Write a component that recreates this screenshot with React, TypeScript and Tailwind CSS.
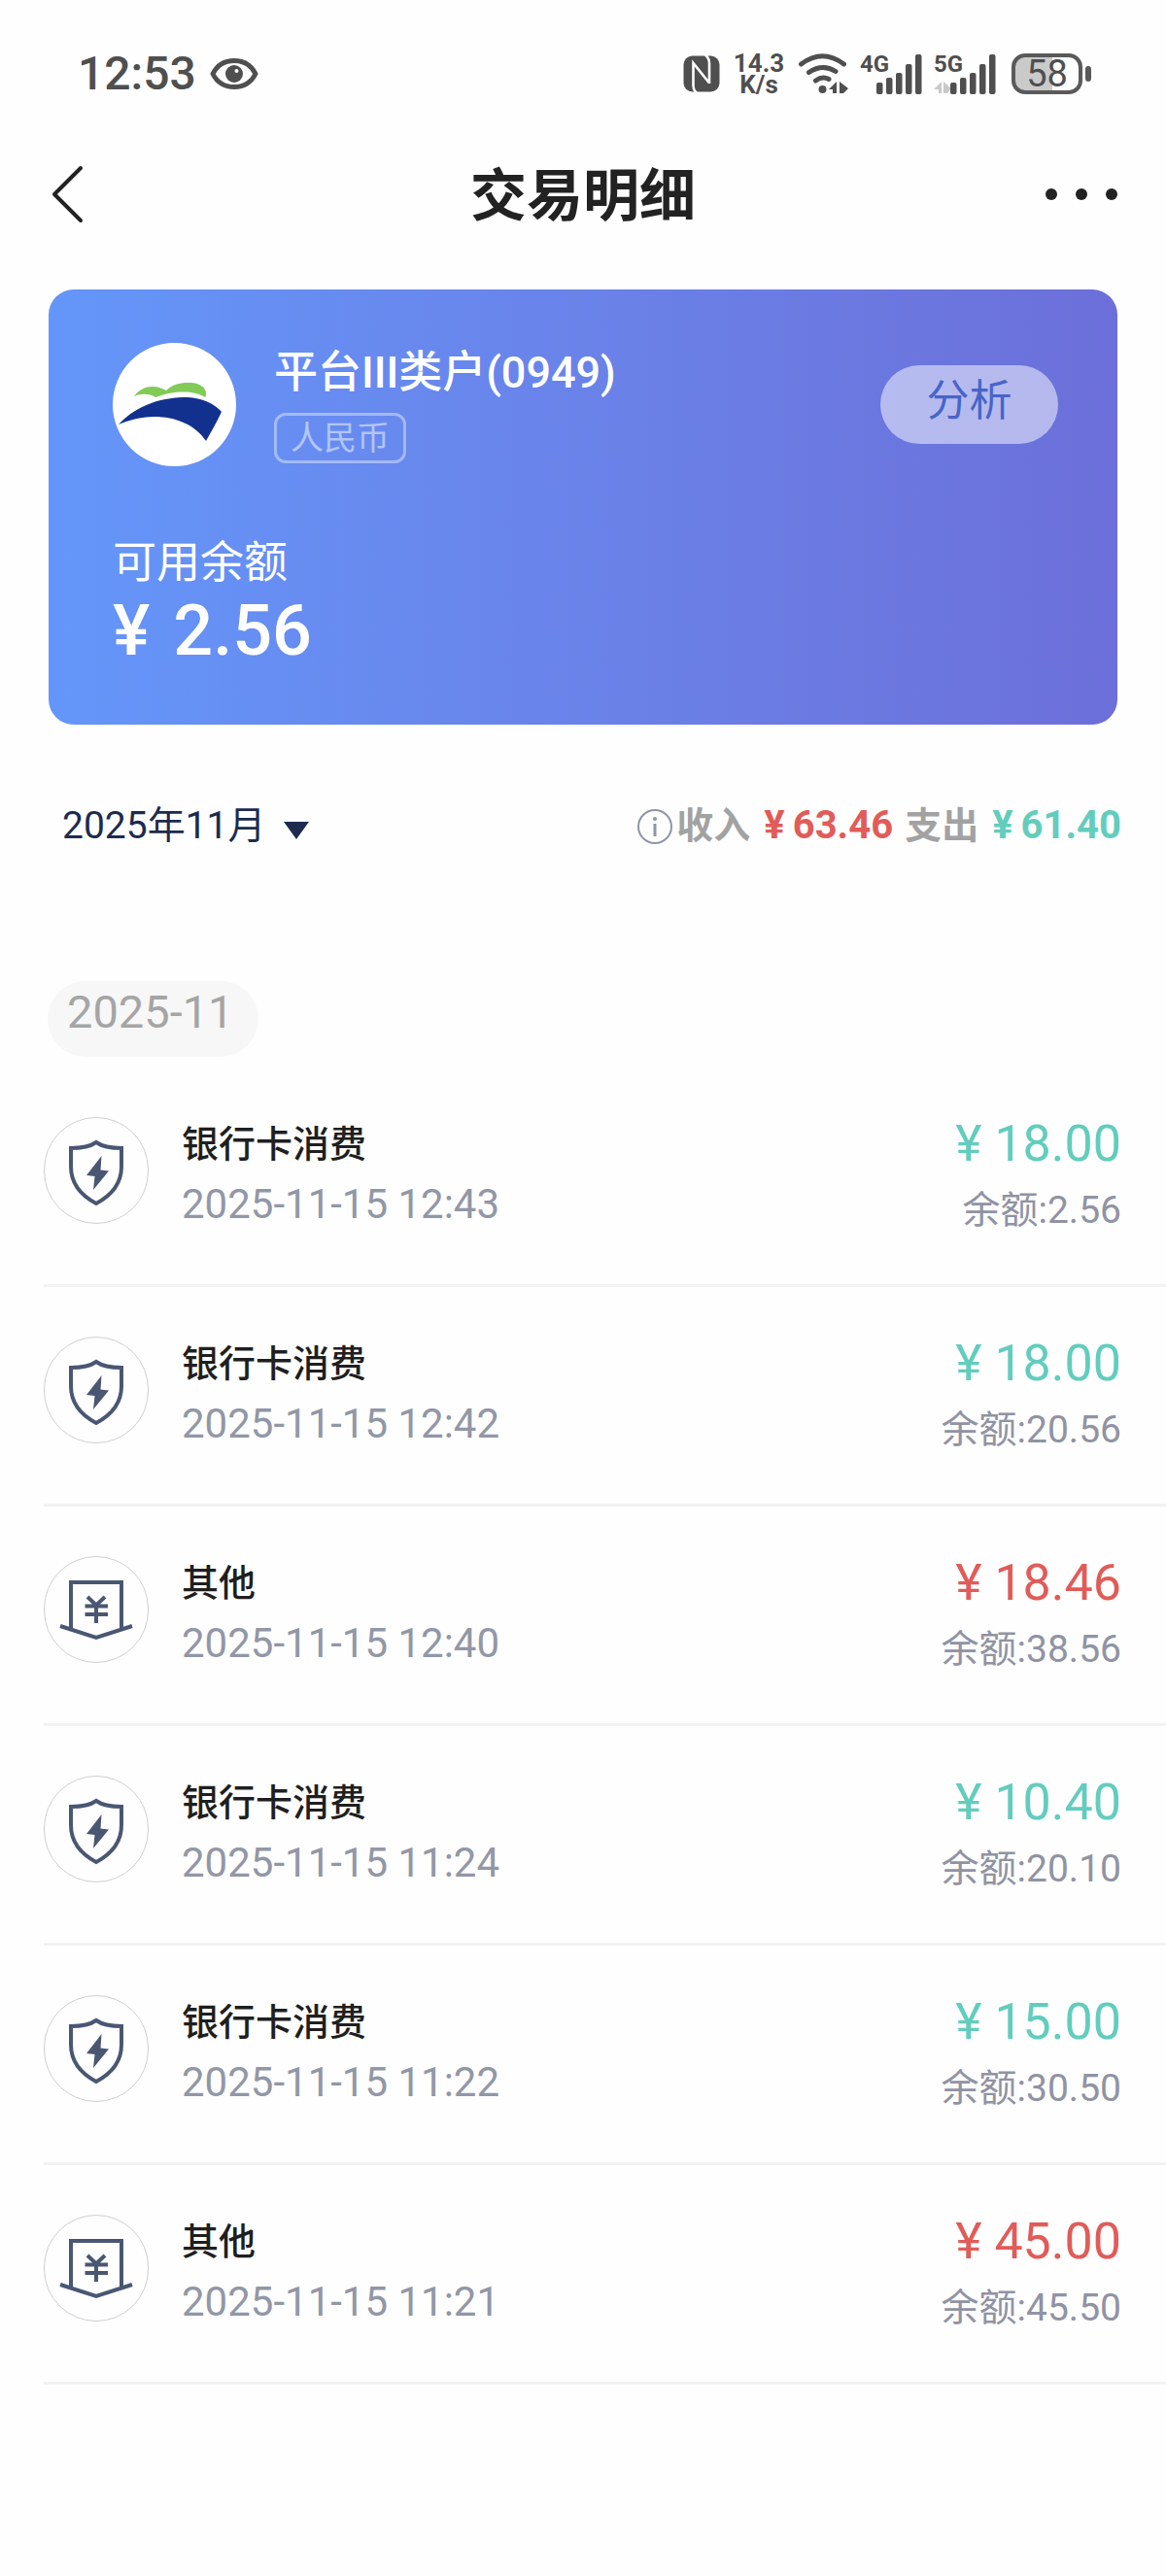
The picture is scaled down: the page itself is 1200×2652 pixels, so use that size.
type Kind = "card" | "other";

type Transaction = {
  kind: Kind;
  title: string;
  time: string;
  amount: string;
  balance: string;
};

const transactions: Transaction[] = [
  { kind: "card", title: "银行卡消费", time: "2025-11-15 12:43", amount: "18.00", balance: "2.56" },
  { kind: "card", title: "银行卡消费", time: "2025-11-15 12:42", amount: "18.00", balance: "20.56" },
  { kind: "other", title: "其他", time: "2025-11-15 12:40", amount: "18.46", balance: "38.56" },
  { kind: "card", title: "银行卡消费", time: "2025-11-15 11:24", amount: "10.40", balance: "20.10" },
  { kind: "card", title: "银行卡消费", time: "2025-11-15 11:22", amount: "15.00", balance: "30.50" },
  { kind: "other", title: "其他", time: "2025-11-15 11:21", amount: "45.00", balance: "45.50" },
];

function EyeIcon() {
  return (
    <svg width="50" height="36" viewBox="0 0 50 36" aria-hidden="true">
      <path d="M3 18C8 8 16 4.500 25 4.500S42 8 47 18C42 28 34 31.500 25 31.500S8 28 3 18Z" fill="none" stroke="#4f4f4f" strokeWidth="5" strokeLinejoin="round" />
      <circle cx="25" cy="18" r="9" fill="#4f4f4f" />
      <circle cx="27.500" cy="15" r="2" fill="#fff" />
    </svg>
  );
}

function NfcIcon() {
  return (
    <svg width="38" height="38" viewBox="0 0 38 38" aria-hidden="true">
      <rect x="0.500" y="0.500" width="37" height="37" rx="9" fill="#4f4f4f" />
      <path d="M14 38.500Q10.500 36 10.500 31V8L27 28.500M23 -0.500Q27 3 27 8V29" fill="none" stroke="#fefefe" strokeWidth="2.600" />
    </svg>
  );
}

function WifiIcon() {
  return (
    <svg width="52" height="42" viewBox="0 0 52 42" aria-hidden="true">
      <g fill="none" stroke="#4f4f4f" strokeWidth="5" strokeLinecap="round">
        <path d="M3.500 11Q25.500 -5.500 47.500 11" />
        <path d="M11.500 19.500Q25.500 10 39 18.500" />
        <path d="M18.500 28Q25.500 23 32 26.500" />
      </g>
      <circle cx="25.500" cy="37" r="4" fill="#4f4f4f" />
      <path d="M40 29V41H36V37H32ZM43 29L52 36L47 41H43Z" fill="#4f4f4f" />
    </svg>
  );
}

function Signal({ label, data }: { label: string; data?: boolean }) {
  return (
    <div className="relative h-[42px] w-[64px]">
      <span className="absolute left-0 top-0 text-[24px] font-bold leading-[22px]">{label}</span>
      <svg width="64" height="42" viewBox="4 0 64 42" aria-hidden="true">
        {data && <path d="M12 29V41H9V37H4ZM14 29L22 36L18 41H14Z" fill="#c9c9c9" />}
        <g fill="#4f4f4f">
          <rect x="21" y="30" width="6.500" height="12" rx="2" />
          <rect x="31" y="25" width="6.500" height="17" rx="2" />
          <rect x="41" y="20" width="6.500" height="22" rx="2" />
          <rect x="51" y="11" width="6.500" height="31" rx="2" />
          <rect x="61" y="1" width="6.500" height="41" rx="2" />
        </g>
      </svg>
    </div>
  );
}

function StatusBar() {
  return (
    <div className="flex h-[152px] items-center justify-between pl-[80px] pr-[77px] text-[#4f4f4f]">
      <div className="flex items-center gap-[14px]">
        <span className="text-[48px] font-medium leading-[56px]">12:53</span>
        <EyeIcon />
      </div>
      <div className="flex items-center">
        <NfcIcon />
        <p className="ml-3 w-[56px] text-center text-[26px] font-bold leading-[22px]">
          14.3
          <br />
          K/s
        </p>
        <div className="ml-3">
          <WifiIcon />
        </div>
        <div className="ml-3">
          <Signal label="4G" />
        </div>
        <div className="ml-3">
          <Signal label="5G" data />
        </div>
        <div className="ml-4 flex items-center gap-[3px]">
          <div className="flex h-[42px] w-[73px] items-center justify-center rounded-[14px] border-4 border-[#5a5a5a] bg-linear-to-r from-[#cacaca] from-58% to-white to-58% text-[38px] leading-[36px]">
            58
          </div>
          <div className="h-4 w-[6px] rounded-full bg-[#5a5a5a]" />
        </div>
      </div>
    </div>
  );
}

function BankLogo() {
  return (
    <div className="h-[127px] w-[127px] shrink-0 rounded-full bg-white">
      <svg width="127" height="127" viewBox="0 0 127 127" role="img" aria-label="银行标志">
        <path d="M22 55C27 48 34 45 41 45C47 45 51 47 55 49C61 43 69 41 77 41C88 40 99 46 95.500 56C87 51 78 50 69 50.500C60 51 52 53 44 56C38 52 29 52 22 55Z" fill="#82cb57" />
        <path d="M6 84C26 63 51 56 77 56C92 57 104 62 112 71C107 82 101 92 96 101C85 84 64 76 43 76C28 76 16 80 6 84Z" fill="#12318f" />
      </svg>
    </div>
  );
}

function ShieldBoltIcon() {
  return (
    <svg width="106" height="108" viewBox="1 1 106 108" aria-hidden="true">
      <path d="M54 26C47 31 38 32 28 32V51C28 70 39 81 54 89C69 81 80 70 80 51V32C70 32 61 31 54 26Z" fill="none" stroke="#4a5773" strokeWidth="4" />
      <path d="M59.500 40L44 60L52.500 61L51 75L67 55.500L58.500 54.500Z" fill="#4a5773" />
    </svg>
  );
}

function YenDeskIcon() {
  return (
    <svg width="106" height="108" viewBox="1 1 106 108" aria-hidden="true">
      <g fill="none" stroke="#4a5773" strokeWidth="4">
        <path d="M28 75V27H80V75M17 72L54 84L91 72" />
        <path d="M45 42L54 50.500L63 42M42.500 51.500H66M42.500 60H66M54 50V69" />
      </g>
    </svg>
  );
}

function TransactionRow({ item }: { item: Transaction }) {
  return (
    <li className="flex items-start border-b-[3px] border-[#f2f2f2] pb-[48px] pr-[46px] pt-[51px]">
      <div className="shrink-0 rounded-full border border-[#cfcfcf]">
        {item.kind === "card" ? <ShieldBoltIcon /> : <YenDeskIcon />}
      </div>
      <div className="ml-[34px] min-w-0 flex-1 leading-[56px]">
        <p className="text-[38px] font-medium text-[#1f1f1f]">{item.title}</p>
        <p className="mt-[6px] text-[42px] text-[#9297a6]">{item.time}</p>
      </div>
      <div className="text-right leading-[56px]">
        <p className={item.kind === "card" ? "text-[52px] text-[#62cdbd]" : "text-[52px] text-[#e15c58]"}>
          ¥ {item.amount}
        </p>
        <p className="mt-3 text-[39px] text-[#9093a3]">余额:{item.balance}</p>
      </div>
    </li>
  );
}

export default function App() {
  return (
    <div className="min-h-screen bg-[#fefefe] font-['Roboto','Noto_Sans_CJK_SC',sans-serif]">
      <StatusBar />

      <header className="flex h-[96px] items-center justify-between pl-[50px] pr-[50px]">
        <button type="button" aria-label="返回" className="flex w-[74px]">
          <svg width="38" height="62" viewBox="0 0 38 62" aria-hidden="true">
            <path d="M33 4L6 31L33 58" fill="none" stroke="#222" strokeWidth="4" strokeLinecap="round" strokeLinejoin="round" />
          </svg>
        </button>
        <h1 className="pt-1 text-[58px] font-bold leading-[72px] text-[#222]">交易明细</h1>
        <button type="button" aria-label="更多" className="flex gap-[19px]">
          <span className="h-3 w-3 rounded-full bg-[#222]" />
          <span className="h-3 w-3 rounded-full bg-[#222]" />
          <span className="h-3 w-3 rounded-full bg-[#222]" />
        </button>
      </header>

      <main>
        <section className="mx-[50px] mt-[50px] rounded-[26px] bg-linear-to-r from-[#6496f9] to-[#6c6fd9] pb-[54px] pl-[66px] pr-[61px] pt-[55px] text-white">
          <div className="flex items-start">
            <BankLogo />
            <div className="ml-[39px] min-w-0 flex-1">
              <h2 className="text-[45px] font-medium leading-[62px]">平台III类户(0949)</h2>
              <span className="mt-[10px] inline-flex h-[52px] items-center rounded-[12px] border-[3px] border-white/40 px-[14px] text-[34px] leading-[44px] text-white/50">
                人民币
              </span>
            </div>
            <button type="button" className="mt-[23px] h-[81px] w-[183px] rounded-full bg-white/50 pb-[8px] text-[44px] leading-[60px] text-[#4765c8]">
              分析
            </button>
          </div>
          <p className="mt-[72px] text-[45px] leading-[56px]">可用余额</p>
          <p className="flex gap-6 text-[72px] font-medium leading-[84px]">
            <span>¥</span>
            <span>2.56</span>
          </p>
        </section>

        <section className="mt-[76px] flex h-[56px] items-center justify-between pl-[64px] pr-[46px]">
          <div className="relative">
            <select aria-label="月份" className="w-[254px] appearance-none bg-transparent text-[39px] leading-[56px] text-[#1d2b4e]">
              <option>2025年11月</option>
            </select>
            <svg className="pointer-events-none absolute right-0 top-[24px]" width="26" height="18" viewBox="0 0 26 18" aria-hidden="true">
              <path d="M0 0H26L13 18Z" fill="#1d2b4e" />
            </svg>
          </div>
          <div className="flex items-center text-[38px] font-bold leading-[56px] text-[#a2a2a2]">
            <svg className="mr-[3px]" width="38" height="38" viewBox="0 0 38 38" aria-hidden="true">
              <circle cx="19" cy="20" r="17" fill="none" stroke="#8f95a6" strokeWidth="2" />
              <path d="M19 17V30" stroke="#8f95a6" strokeWidth="3" />
              <circle cx="19" cy="12" r="2" fill="#8f95a6" />
            </svg>
            <span>收入</span>
            <span className="ml-[14px] flex gap-2 text-[40px] text-[#e15c58]">
              <span>¥</span>
              <span>63.46</span>
            </span>
            <span className="ml-3">支出</span>
            <span className="ml-[14px] flex gap-2 text-[40px] text-[#62cdbd]">
              <span>¥</span>
              <span>61.40</span>
            </span>
          </div>
        </section>

        <section className="mt-[132px]">
          <h2 className="ml-[49px] inline-block rounded-full bg-[#f7f7f7] pb-[14px] pl-5 pr-[26px] text-[47px] leading-[64px] text-[#a5a5a5]">
            2025-11
          </h2>
          <ul className="ml-[45px] mt-[11px]">
            {transactions.map((item) => (
              <TransactionRow key={item.time} item={item} />
            ))}
          </ul>
        </section>
      </main>
    </div>
  );
}
